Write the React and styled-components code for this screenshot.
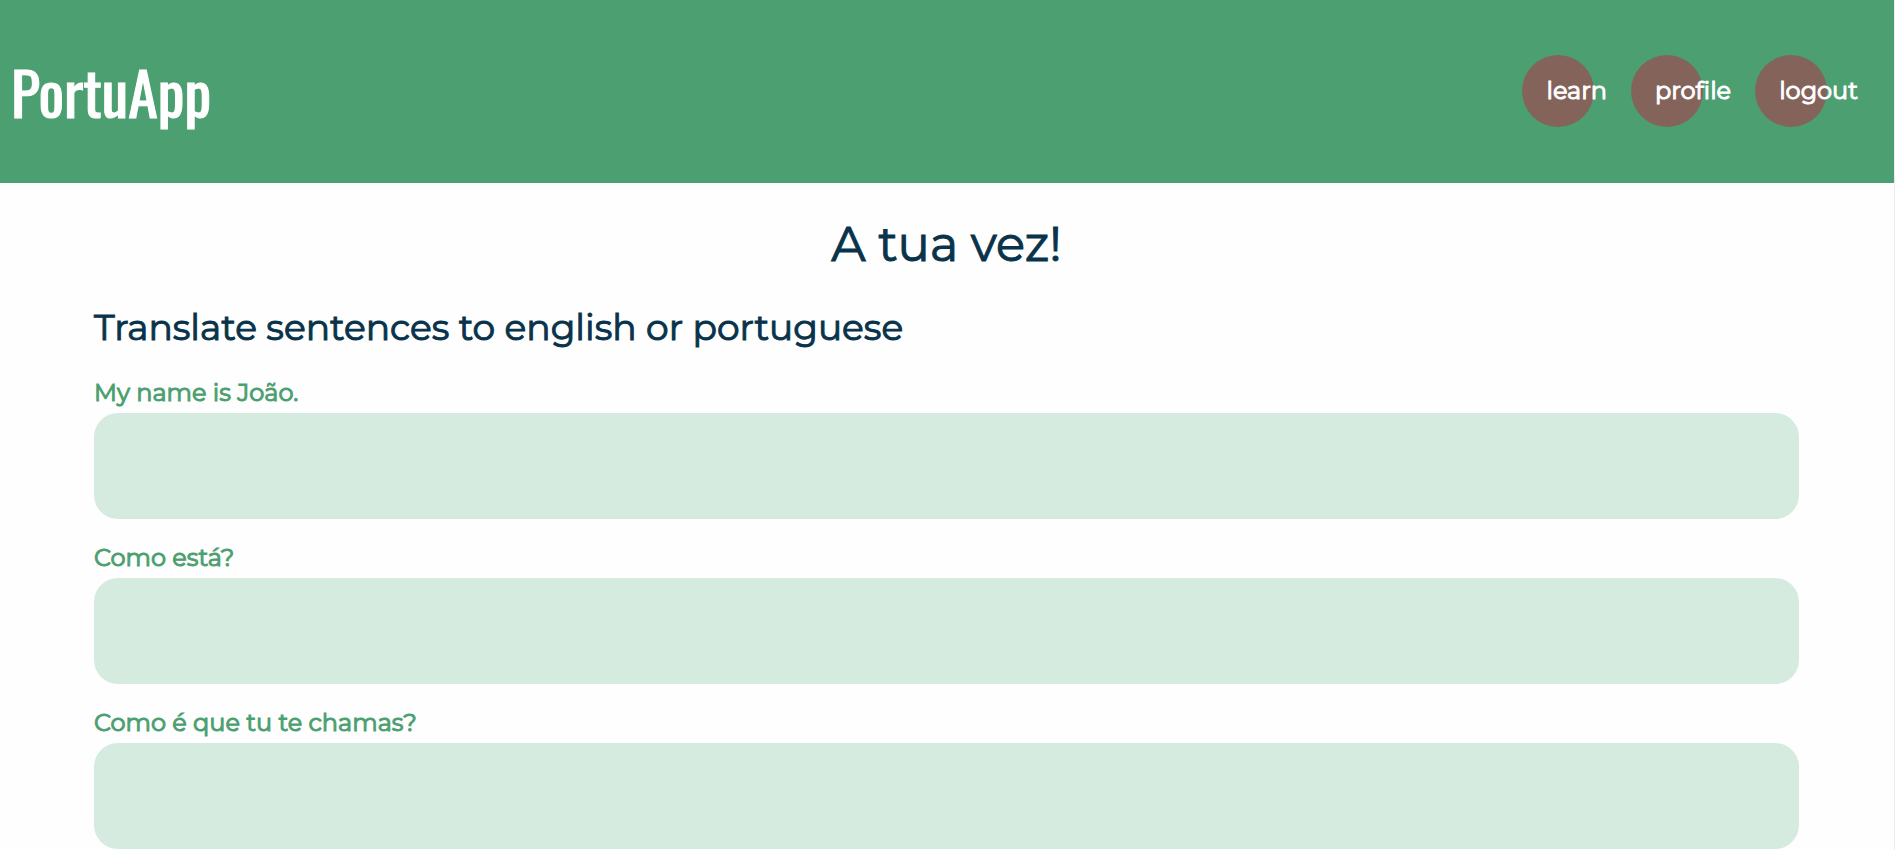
import React from "react";
import styled, { createGlobalStyle } from "styled-components";

const GlobalStyle = createGlobalStyle`
  *, *::before, *::after { box-sizing: border-box; }
  body {
    margin: 0;
    background: #fefefe;
    color: #08334b;
    font-family: Montserrat, Inter, "Open Sans", sans-serif;
    font-weight: 400;
    -webkit-text-stroke: 1px;
  }
`;

const Page = styled.div`
  min-height: 100vh;
  border-right: 1px solid #ececec;
`;

const Header = styled.header`
  display: flex;
  justify-content: space-between;
  align-items: flex-start;
  padding: 55px 12px 56px 11px;
  background: #4c9f70;
`;

const Logo = styled.a`
  color: #fff;
  font-family: Oswald, "Roboto Condensed", "Liberation Sans Narrow", sans-serif;
  font-size: 60px;
  line-height: 72px;
  text-decoration: none;
`;

const Nav = styled.nav`
  display: flex;
`;

const NavLink = styled.a`
  position: relative;
  isolation: isolate;
  padding: 0 24px;
  color: #fff;
  font-size: 24px;
  line-height: 72px;
  text-decoration: none;

  &::before {
    content: "";
    position: absolute;
    z-index: -1;
    top: 0;
    left: 0;
    width: 72px;
    height: 72px;
    border-radius: 50%;
    background: #84635b;
  }
`;

const Main = styled.main`
  padding: 31px 95px 0 94px;
`;

const Title = styled.h1`
  margin: 0 0 31px;
  font-size: 48px;
  font-weight: 400;
  line-height: 60px;
  text-align: center;
`;

const Subtitle = styled.h2`
  margin: 0 0 29px;
  font-size: 36px;
  font-weight: 400;
  line-height: 44px;
`;

const Form = styled.form`
  display: flex;
  flex-direction: column;
  gap: 24px;
`;

const Field = styled.div`
  display: flex;
  flex-direction: column;
  gap: 5px;
`;

const Label = styled.label`
  color: #4c9f70;
  font-size: 24px;
  line-height: 30px;
`;

const Answer = styled.input`
  width: 100%;
  height: 106px;
  padding: 0 24px;
  border: 0;
  border-radius: 24px;
  background: #d5ebdf;
  color: inherit;
  font: inherit;
  font-size: 24px;
`;

const links = ["learn", "profile", "logout"];
const sentences = ["My name is João.", "Como está?", "Como é que tu te chamas?"];

export default function App() {
  return (
    <Page>
      <GlobalStyle />
      <Header>
        <Logo href="#">PortuApp</Logo>
        <Nav>
          {links.map((name) => (
            <NavLink key={name} href={`#${name}`}>{name}</NavLink>
          ))}
        </Nav>
      </Header>
      <Main>
        <Title>A tua vez!</Title>
        <Subtitle>Translate sentences to english or portuguese</Subtitle>
        <Form>
          {sentences.map((sentence, i) => (
            <Field key={sentence}>
              <Label htmlFor={`answer-${i}`}>{sentence}</Label>
              <Answer id={`answer-${i}`} type="text" />
            </Field>
          ))}
        </Form>
      </Main>
    </Page>
  );
}
